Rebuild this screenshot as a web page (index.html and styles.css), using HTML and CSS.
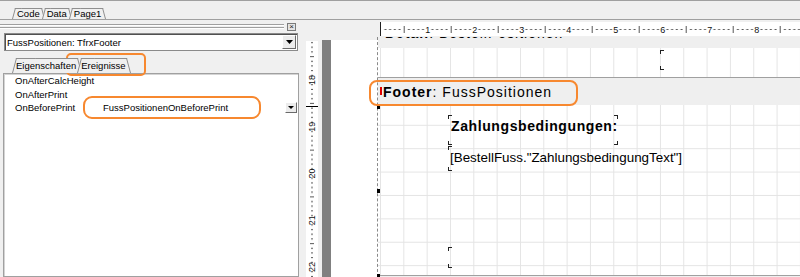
FILE: index.html
```html
<!DOCTYPE html>
<html>
<head>
<meta charset="utf-8">
<title>Report Designer</title>
<link rel="stylesheet" href="styles.css">
</head>
<body>
<div class="app">
  <div class="topbar">
    <div class="tab"><span>Code</span></div>
    <div class="tab"><span>Data</span></div>
    <div class="tab"><span>Page1</span></div>
  </div>
  <div class="main">
    <div class="left">
      <div class="lhead">
        <div class="grip"></div>
        <div class="close">×</div>
      </div>
      <div class="combo">
        <span class="combo-text">FussPositionen: TfrxFooter</span>
        <div class="ddbtn"><svg width="7" height="4" viewBox="0 0 7 4"><path d="M0 0H7L3.5 4Z"/></svg></div>
      </div>
      <div class="ltabs">
        <div class="tab"><span>Eigenschaften</span></div>
        <div class="tab"><span>Ereignisse</span></div>
      </div>
      <div class="inspector">
        <div class="row"><div class="name">OnAfterCalcHeight</div><div class="value"></div></div>
        <div class="row"><div class="name">OnAfterPrint</div><div class="value"></div></div>
        <div class="row"><div class="name">OnBeforePrint</div><div class="value"><span class="vtext">FussPositionenOnBeforePrint</span><div class="ddbtn small"><svg width="6" height="3" viewBox="0 0 6 3"><path d="M0 0H6L3 3Z"/></svg></div></div></div>
      </div>
    </div>
    <div class="right">
      <div class="rtop">
        <div class="hruler">
          <svg class="ruler" width="419" height="14" viewBox="0 0 419 14">
            <defs>
              <pattern id="hp" patternUnits="userSpaceOnUse" x="-0.3" y="0" width="47" height="14">
                <rect x="3.7" y="7" width="2" height="1"/>
                <rect x="8.4" y="7" width="2" height="1"/>
                <rect x="13.1" y="7" width="2" height="1"/>
                <rect x="17.8" y="7" width="2" height="1"/>
                <rect x="23" y="4" width="1" height="7"/>
                <rect x="27.2" y="7" width="2" height="1"/>
                <rect x="31.9" y="7" width="2" height="1"/>
                <rect x="36.6" y="7" width="2" height="1"/>
                <rect x="41.3" y="7" width="2" height="1"/>
              </pattern>
            </defs>
            <rect x="0" y="0" width="419" height="14" fill="url(#hp)"/>
            <text x="46.7" y="10.5">1</text>
            <text x="93.7" y="10.5">2</text>
            <text x="140.7" y="10.5">3</text>
            <text x="187.7" y="10.5">4</text>
            <text x="234.7" y="10.5">5</text>
            <text x="281.7" y="10.5">6</text>
            <text x="328.7" y="10.5">7</text>
            <text x="375.7" y="10.5">8</text>
          </svg>
        </div>
      </div>
      <div class="rbody">
        <div class="vruler">
          <svg class="ruler" width="12" height="236" viewBox="0 0 12 236">
            <defs>
              <pattern id="vp" patternUnits="userSpaceOnUse" x="0" y="39" width="12" height="46.75">
                <rect x="5" y="4.2" width="2" height="1"/>
                <rect x="5" y="8.9" width="2" height="1"/>
                <rect x="5" y="13.5" width="2" height="1"/>
                <rect x="5" y="18.2" width="2" height="1"/>
                <rect x="4" y="22.9" width="4" height="1"/>
                <rect x="5" y="27.6" width="2" height="1"/>
                <rect x="5" y="32.2" width="2" height="1"/>
                <rect x="5" y="36.9" width="2" height="1"/>
                <rect x="5" y="41.6" width="2" height="1"/>
              </pattern>
            </defs>
            <rect x="0" y="0" width="12" height="236" fill="url(#vp)"/>
            <rect x="0" y="65" width="12" height="1" fill="#000"/>
            <text transform="translate(9,39) rotate(-90)">18</text>
            <text transform="translate(9,85.75) rotate(-90)">19</text>
            <text transform="translate(9,132.5) rotate(-90)">20</text>
            <text transform="translate(9,179.25) rotate(-90)">21</text>
            <text transform="translate(9,226) rotate(-90)">22</text>
          </svg>
        </div>
        <div class="darkbar"></div>
        <div class="pmargin"></div>
        <div class="page">
          <div class="caption"><span class="cap-text"><b>Detail</b>: BestellPositionen</span></div>
          <div class="band1">
            <div class="obj obj0"><i class="c tl"></i><i class="c bl"></i></div>
          </div>
          <div class="fband">
            <span class="redmark"></span>
            <span><b>Footer</b>: FussPositionen</span>
          </div>
          <div class="band2">
            <div class="obj obj1"><span class="t-bold">Zahlungsbedingungen:</span><i class="c tl"></i><i class="c tr"></i><i class="c bl"></i><i class="c br"></i></div>
            <div class="obj obj2"><span class="t-reg">[BestellFuss."ZahlungsbedingungText"]</span><i class="c tl"></i><i class="c bl"></i></div>
            <div class="obj obj3"><i class="c tl"></i><i class="c bl"></i></div>
          </div>
          <div class="caption2"></div>
          <span class="sizer s1"></span>
          <span class="sizer s2"></span>
          <span class="sizer s3"></span>
        </div>
      </div>
    </div>
  </div>
  <div class="note n1"></div>
  <div class="note n2"></div>
  <div class="note n3"></div>
</div>
</body>
</html>
```
FILE: styles.css
```css
* { box-sizing: border-box; }
html, body { margin: 0; padding: 0; }
body {
  background: #f0f0f0;
  font-family: "Liberation Sans", Arial, sans-serif;
  font-size: 9.5px;
  color: #000;
}
.app {
  position: relative;
  width: 800px;
  height: 277px;
  overflow: hidden;
  display: flex;
  flex-direction: column;
  background: #f0f0f0;
}

/* tabs */
.topbar {
  height: 20px;
  flex: none;
  border-top: 1px solid #a0a0a0;
  border-bottom: 1px solid #a0a0a0;
  display: flex;
  align-items: flex-end;
  padding-left: 12px;
}
.tab {
  position: relative;
  z-index: 1;
  height: 11px;
  line-height: 11px;
  padding: 0 5px;
  margin-left: -3px;
  white-space: nowrap;
}
.tab:first-child { margin-left: 0; }
.tab::before, .tab::after {
  content: "";
  position: absolute;
  top: 0;
  bottom: 0;
  width: 60%;
  background: #f0f0f0;
  border-top: 1px solid #8f8f8f;
  z-index: -1;
}
.tab::before {
  left: 0;
  border-left: 1px solid #8f8f8f;
  transform-origin: 0 100%;
  transform: skewX(-15deg);
}
.tab::after {
  right: 0;
  border-right: 1px solid #8f8f8f;
  transform-origin: 100% 100%;
  transform: skewX(15deg);
}
.tab span { position: relative; }

.main { flex: 1; display: flex; min-height: 0; }

/* left panel */
.left { width: 300px; flex: none; display: flex; flex-direction: column; }
.lhead { height: 13px; flex: none; display: flex; align-items: center; padding-right: 4px; }
.grip {
  flex: 1;
  height: 5px;
  background: linear-gradient(#a0a0a0 0 1px, #fff 1px 2px, transparent 2px 3px, #a0a0a0 3px 4px, #fff 4px 5px);
}
.close {
  width: 9px;
  height: 8px;
  margin-left: 3px;
  border: 1px solid #7a7a7a;
  background: #e4e4e4;
  font-size: 8px;
  line-height: 6px;
  text-align: center;
  color: #222;
}
.combo {
  height: 18px;
  flex: none;
  margin: 0 2px 0 4px;
  border: 1px solid #8a8a8a;
  box-shadow: inset 1px 1px 0 #505050;
  background: #fff;
  display: flex;
  align-items: center;
}
.combo-text { flex: 1; padding-left: 2px; white-space: nowrap; }
.ddbtn {
  width: 14px;
  height: 14px;
  margin-right: 1px;
  background: #ececec;
  border: 1px solid;
  border-color: #fff #6a6a6a #6a6a6a #fff;
  display: flex;
  align-items: center;
  justify-content: center;
}
.ddbtn svg { display: block; fill: #000; }
.ltabs {
  height: 22px;
  flex: none;
  display: flex;
  align-items: flex-end;
  padding-left: 12px;
}
.ltabs .tab {
  height: 15px;
  line-height: 15px;
  padding: 0 5px 0 4px;
  margin-left: -4px;
}
.ltabs .tab:first-child { margin-left: 0; }
.inspector {
  flex: 1;
  margin: 0 1px 0 3px;
  background: #fff;
  border: 1px solid #a0a0a0;
  box-shadow: inset 1px 1px 0 #d4d4d4;
}
.row { display: flex; height: 13.5px; line-height: 13.5px; }
.row .name { width: 96px; padding-left: 11px; white-space: nowrap; }
.row .value { flex: 1; padding-left: 3px; display: flex; align-items: flex-start; }
.vtext { flex: 1; white-space: nowrap; }
.ddbtn.small { width: 12px; height: 11px; margin: 1px 1px 0 0; }

/* right */
.right { flex: 1; display: flex; flex-direction: column; min-width: 0; }
.rtop { height: 17px; flex: none; padding: 2px 0 1px 80px; }
.hruler { height: 14px; background: #fff; border-left: 1px solid #202020; overflow: hidden; }
.ruler { display: block; fill: #555; }
.ruler text {
  font-family: "Liberation Sans", Arial, sans-serif;
  font-size: 9px;
  fill: #111;
  text-anchor: middle;
}
.rbody { flex: 1; display: flex; min-height: 0; }
.vruler { width: 12px; flex: none; margin: 4px 4px 0 6px; background: #fff; overflow: hidden; }
.darkbar { width: 9px; flex: none; margin-top: 3px; background: #808080; }
.pmargin { width: 46px; flex: none; margin-top: 3px; background: #fff; }
.page {
  flex: 1;
  border-left: 1px dashed #8a8a8a;
  position: relative;
  display: flex;
  flex-direction: column;
  background: #fff;
}
.caption {
  height: 11px;
  flex: none;
  background: #efefef;
  overflow: hidden;
  padding-left: 7px;
  font-size: 14px;
  letter-spacing: 1px;
}
.cap-text { display: block; line-height: 14px; margin-top: -11px; white-space: nowrap; }
.band1 {
  height: 30px;
  flex: none;
  position: relative;
  border-bottom: 1px solid #a0a0a0;
  background-image: linear-gradient(90deg, #e4e4e4 1px, transparent 1px);
  background-size: 23.33px 100%;
  background-position: 2px 0;
}
.fband {
  height: 27px;
  flex: none;
  position: relative;
  background: #efefef;
  display: flex;
  align-items: center;
  padding-left: 5px;
  font-size: 14px;
  letter-spacing: 1px;
  white-space: nowrap;
}
.redmark {
  position: absolute;
  left: 2px;
  top: 9px;
  width: 2px;
  height: 8px;
  background: #e00000;
}
.band2 {
  height: 171px;
  flex: none;
  position: relative;
  border-bottom: 1px solid #a0a0a0;
  background-image:
    linear-gradient(90deg, #e4e4e4 1px, transparent 1px),
    linear-gradient(#e4e4e4 1px, transparent 1px);
  background-size: 23.33px 100%, 100% 23.4px;
  background-position: 2px 0, 0 19.8px;
}
.caption2 { flex: 1; background: #efefef; }

.obj { position: absolute; }
.obj0 { left: 282px; top: 2px; width: 200px; height: 20px; }
.obj1 { left: 70px; top: 10px; width: 170px; height: 30px; padding: 3px 0 0 3px; }
.obj2 { left: 70px; top: 41px; width: 400px; height: 25px; padding: 4px 0 0 2px; }
.obj3 { left: 70px; top: 142px; width: 400px; height: 21px; }
.t-bold { display: block; font-weight: bold; font-size: 14px; line-height: 16px; letter-spacing: 0.6px; white-space: nowrap; }
.t-reg { display: block; font-size: 13.4px; line-height: 16px; white-space: nowrap; }
.c { position: absolute; width: 4px; height: 4px; border: 0 solid #222; }
.c.tl { left: 0; top: 0; border-top-width: 1px; border-left-width: 1px; }
.c.tr { right: 0; top: 0; border-top-width: 1px; border-right-width: 1px; }
.c.bl { left: 0; bottom: 0; border-bottom-width: 1px; border-left-width: 1px; }
.c.br { right: 0; bottom: 0; border-bottom-width: 1px; border-right-width: 1px; }

.sizer { position: absolute; left: -1px; width: 3px; height: 4px; background: #000; }
.s1 { top: 68px; }
.s2 { top: 152px; }
.s3 { top: 237px; }

/* hand-drawn annotations */
.note {
  position: absolute;
  border: 2px solid #f7882f;
  border-radius: 7px;
  pointer-events: none;
}
.n1 { left: 66px; top: 53px; width: 80px; height: 23px; border-radius: 5px; }
.n2 { left: 83px; top: 96px; width: 178px; height: 23px; border-radius: 9px; }
.n3 { left: 369px; top: 80px; width: 209px; height: 26px; border-radius: 8px; }
```
